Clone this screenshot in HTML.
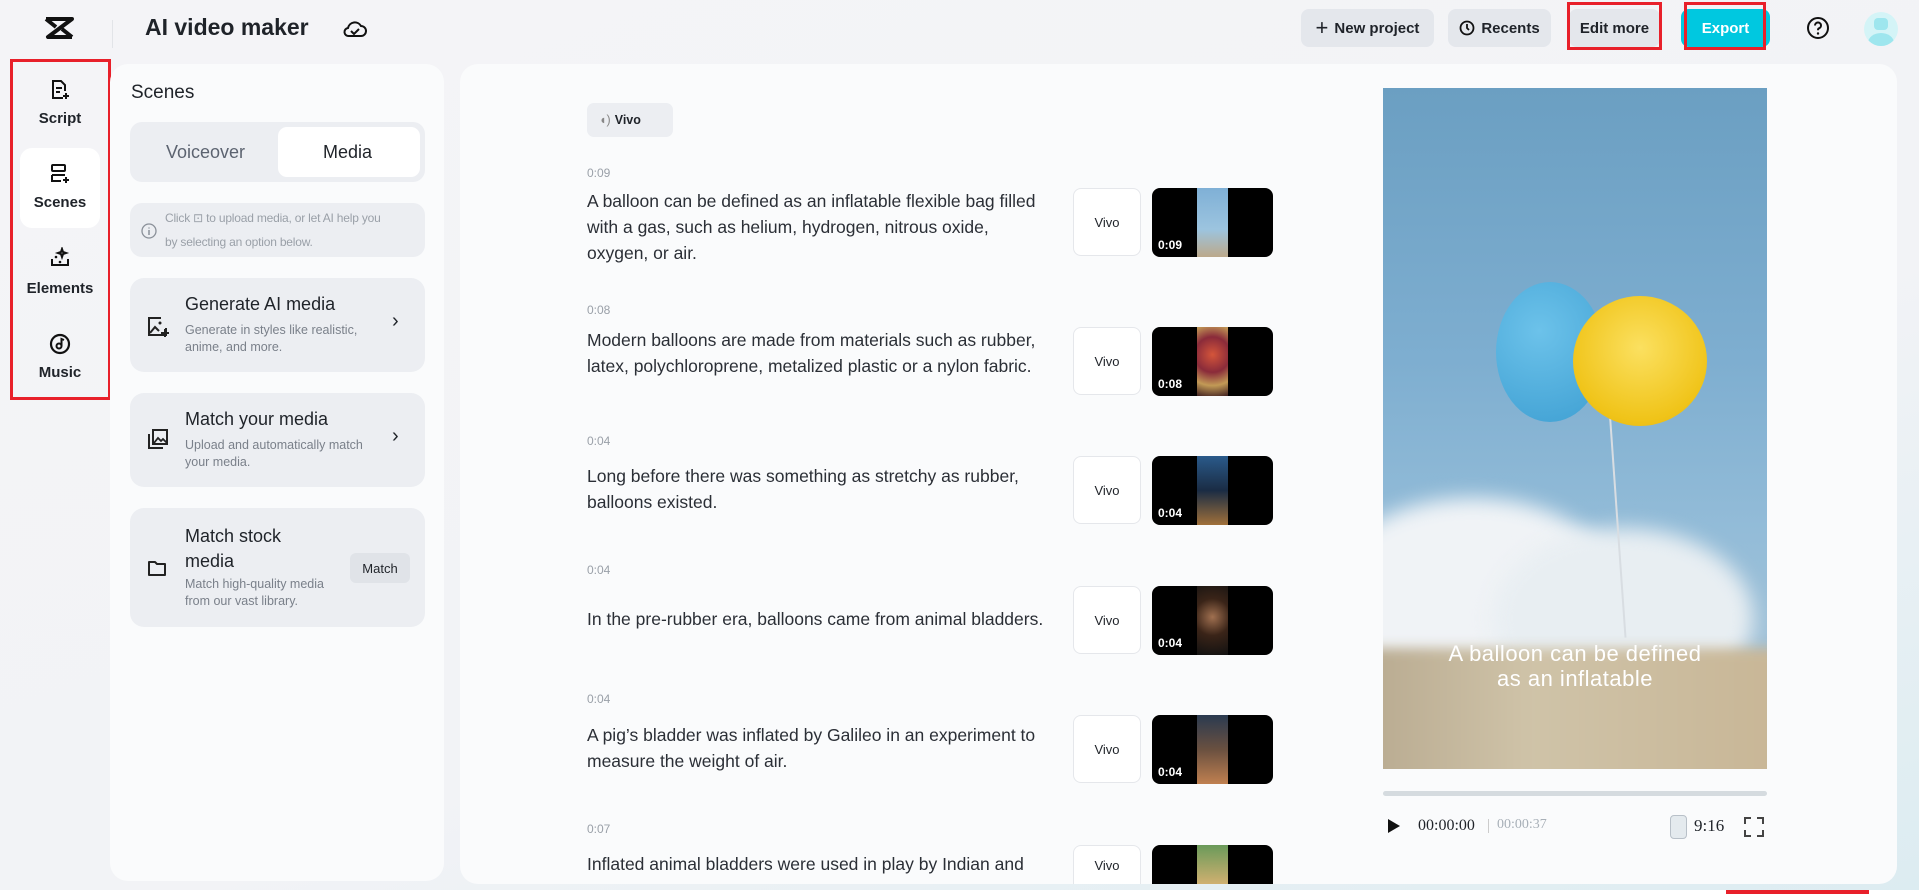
<!DOCTYPE html>
<html><head><meta charset="utf-8"><style>
*{box-sizing:border-box;margin:0;padding:0}
body{width:1919px;height:894px;overflow:hidden;font-family:"Liberation Sans",sans-serif;color:#1f2329;background:linear-gradient(160deg,#f4f4f7 0%,#f2f3f6 60%,#dcecf1 100%);position:relative}
.abs{position:absolute}
.btn{position:absolute;top:9px;height:38px;border-radius:8px;background:#e4e7ec;font-size:15px;font-weight:bold;display:flex;align-items:center;justify-content:center;gap:6px;color:#1f2329}
.red{position:absolute;border:3px solid #e8202a}
.side{position:absolute;left:20px;width:80px;text-align:center;font-size:15px;font-weight:bold}
.card{position:absolute;left:130px;width:295px;background:#eceef2;border-radius:14px}
.card .t{position:absolute;left:55px;font-size:18px;color:#1f2329}
.card .s{position:absolute;left:55px;font-size:12.5px;color:#7a808a;line-height:17px}
.ts{position:absolute;left:587px;font-size:12px;color:#9aa0a8}
.tx{position:absolute;left:587px;font-size:17.5px;line-height:26px;color:#2b2f36;width:465px}
.vv{position:absolute;left:1073px;width:68px;height:68px;border:1px solid #e5e7eb;border-radius:8px;background:#fff;font-size:13px;display:flex;align-items:center;justify-content:center}
.th{position:absolute;left:1152px;width:121px;height:69px;background:#000;border-radius:8px;overflow:hidden}
.th i{position:absolute;left:45px;top:0;width:31px;height:100%}
.th b{position:absolute;left:6px;bottom:5px;color:#fff;font-size:12px}
</style></head><body>
<svg class="abs" style="left:44px;top:16px" width="30" height="24" viewBox="0 0 30 24"><path d="M2 3h26L4 21h24M2 3l10 8M28 21L18 13" stroke="#111" stroke-width="4" fill="none" stroke-linejoin="round"/></svg>
<div class="abs" style="left:112px;top:20px;width:1px;height:28px;background:#e2e4e8"></div>
<div class="abs" style="left:145px;top:14px;font-size:23px;font-weight:bold">AI video maker</div>
<svg class="abs" style="left:342px;top:17px" width="26" height="24" viewBox="0 0 26 24"><path d="M7 19h12a5 5 0 0 0 0-10 7 7 0 0 0-13 2 4 4 0 0 0 1 8z" stroke="#111" stroke-width="2" fill="none"/><path d="M9 14l3 3 5-5" stroke="#111" stroke-width="2" fill="none"/></svg>
<div class="btn" style="left:1301px;width:133px"><span style="font-size:22px;font-weight:normal">+</span>New project</div>
<div class="btn" style="left:1448px;width:103px"><svg width="16" height="16" viewBox="0 0 16 16"><circle cx="8" cy="8" r="6.5" stroke="#111" stroke-width="1.8" fill="none"/><path d="M8 4v4l2 2" stroke="#111" stroke-width="1.8" fill="none"/></svg>Recents</div>
<div class="btn" style="left:1569px;width:91px">Edit more</div>
<div class="red" style="left:1567px;top:2px;width:95px;height:48px"></div>
<div class="btn" style="left:1681px;width:89px;background:#00c8e0;color:#fff">Export</div>
<div class="red" style="left:1684px;top:2px;width:82px;height:48px"></div>
<svg class="abs" style="left:1806px;top:16px" width="24" height="24" viewBox="0 0 24 24"><circle cx="12" cy="12" r="10" stroke="#111" stroke-width="2" fill="none"/><path d="M9 9.5a3 3 0 1 1 4 2.8c-1 .4-1 1-1 2" stroke="#111" stroke-width="2" fill="none"/><circle cx="12" cy="17.5" r="1.2" fill="#111"/></svg>
<div class="abs" style="left:1864px;top:12px;width:34px;height:34px;border-radius:50%;background:#d4f4f7;overflow:hidden"><div class="abs" style="left:10px;top:6px;width:14px;height:12px;border-radius:4px;background:#9ee6ee"></div><div class="abs" style="left:4px;top:21px;width:26px;height:20px;border-radius:50%;background:#9ee6ee"></div></div>

<div class="abs" style="left:20px;top:148px;width:80px;height:80px;background:#fff;border-radius:12px"></div>
<svg class="abs" style="left:50px;top:79px" width="20" height="22" viewBox="0 0 20 22"><path d="M13 19H3V2h8l4 4v6" stroke="#111" stroke-width="2" fill="none"/><path d="M6 9h6M6 13h4M16 14v6M13 17h6" stroke="#111" stroke-width="2"/></svg>
<div class="side" style="top:110px">Script</div>
<svg class="abs" style="left:50px;top:163px" width="20" height="22" viewBox="0 0 20 22"><rect x="2" y="2" width="13" height="6" rx="1" stroke="#111" stroke-width="2" fill="none"/><path d="M2 12h13M2 12v6h9M16 14v6M13 17h6" stroke="#111" stroke-width="2" fill="none"/></svg>
<div class="side" style="top:194px">Scenes</div>
<svg class="abs" style="left:50px;top:247px" width="20" height="22" viewBox="0 0 20 22"><path d="M12 2l1 3 3 1-3 1-1 3-1-3-3-1 3-1zM2 12v6h16v-6" stroke="#111" stroke-width="2" fill="none"/><circle cx="6" cy="10" r="1.3" fill="#111"/><circle cx="10" cy="15" r="1.3" fill="#111"/></svg>
<div class="side" style="top:280px">Elements</div>
<svg class="abs" style="left:49px;top:333px" width="22" height="22" viewBox="0 0 22 22"><circle cx="11" cy="11" r="9" stroke="#111" stroke-width="2.2" fill="none"/><circle cx="10" cy="13" r="2.5" stroke="#111" stroke-width="2" fill="none"/><path d="M12.5 13V6l2.5 1" stroke="#111" stroke-width="2" fill="none"/></svg>
<div class="side" style="top:364px">Music</div>
<div class="red" style="left:10px;top:59px;width:101px;height:341px"></div>

<div class="abs" style="left:110px;top:64px;width:334px;height:817px;background:#fafbfc;border-radius:18px"></div>
<div class="abs" style="left:131px;top:82px;font-size:19px">Scenes</div>
<div class="abs" style="left:130px;top:122px;width:295px;height:60px;background:#eceef2;border-radius:12px"></div>
<div class="abs" style="left:278px;top:127px;width:142px;height:50px;background:#fff;border-radius:9px"></div>
<div class="abs" style="left:166px;top:142px;font-size:18px;color:#5c6370">Voiceover</div>
<div class="abs" style="left:323px;top:142px;font-size:18px">Media</div>
<div class="abs" style="left:130px;top:203px;width:295px;height:54px;background:#eceef2;border-radius:12px"></div>
<svg class="abs" style="left:141px;top:223px" width="16" height="16" viewBox="0 0 16 16"><circle cx="8" cy="8" r="7" stroke="#8a9099" stroke-width="1.3" fill="none"/><path d="M8 7v5M8 4.5v1" stroke="#8a9099" stroke-width="1.5"/></svg>
<div class="abs" style="left:165px;top:206px;font-size:12px;color:#9aa0a8;line-height:24px;width:260px;letter-spacing:-0.2px">Click ⊡ to upload media, or let AI help you<br>by selecting an option below.</div>

<div class="card" style="top:278px;height:94px"><div class="t" style="top:16px">Generate AI media</div><div class="s" style="top:44px">Generate in styles like realistic,<br>anime, and more.</div>
<svg class="abs" style="left:17px;top:38px" width="22" height="22" viewBox="0 0 22 22"><path d="M14 2H2v17h17v-7" stroke="#222" stroke-width="2" fill="none"/><path d="M3 17l5-6 4 4" stroke="#222" stroke-width="2" fill="none"/><circle cx="13" cy="7" r="1.5" fill="#222"/><path d="M18 13v8M14 17h8" stroke="#222" stroke-width="2"/></svg>
<div class="abs" style="left:262px;top:32px;font-size:20px">›</div></div>
<div class="card" style="top:393px;height:94px"><div class="t" style="top:16px">Match your media</div><div class="s" style="top:44px">Upload and automatically match<br>your media.</div>
<svg class="abs" style="left:17px;top:35px" width="22" height="22" viewBox="0 0 22 22"><rect x="6" y="2" width="14" height="14" stroke="#222" stroke-width="2" fill="none"/><path d="M2 6v14h14" stroke="#222" stroke-width="2" fill="none"/><path d="M7 15l4-5 3 3 2-2 4 4" stroke="#222" stroke-width="1.8" fill="none"/></svg>
<div class="abs" style="left:262px;top:32px;font-size:20px">›</div></div>
<div class="card" style="top:508px;height:119px"><div class="t" style="top:16px;line-height:25px">Match stock<br>media</div><div class="s" style="top:68px">Match high-quality media<br>from our vast library.</div>
<svg class="abs" style="left:17px;top:51px" width="20" height="18" viewBox="0 0 20 18"><path d="M2 3h6l2 2h8v11H2z" stroke="#222" stroke-width="2" fill="none" stroke-linejoin="round"/></svg>
<div class="abs" style="left:220px;top:45px;width:60px;height:30px;background:#e0e3e8;border-radius:6px;font-size:13px;display:flex;align-items:center;justify-content:center">Match</div></div>

<div class="abs" style="left:460px;top:64px;width:1437px;height:820px;background:#fafbfc;border-radius:18px"></div>
<div class="abs" style="left:587px;top:103px;width:86px;height:34px;background:#eceef2;border-radius:7px;font-size:12.5px;font-weight:bold;display:flex;align-items:center;padding-left:12px;gap:4px"><span style="color:#888;font-weight:normal">◖)</span>Vivo</div>

<div class="ts" style="top:166px">0:09</div>
<div class="tx" style="top:188px">A balloon can be defined as an inflatable flexible bag filled with a gas, such as helium, hydrogen, nitrous oxide,<br>oxygen, or air.</div>
<div class="vv" style="top:188px">Vivo</div>
<div class="th" style="top:188px"><i style="background:linear-gradient(#7fb0d6,#9cc4df 60%,#bca98a)"></i><b>0:09</b></div>

<div class="ts" style="top:303px">0:08</div>
<div class="tx" style="top:327px">Modern balloons are made from materials such as rubber, latex, polychloroprene, metalized plastic or a nylon fabric.</div>
<div class="vv" style="top:327px">Vivo</div>
<div class="th" style="top:327px"><i style="background:radial-gradient(circle at 50% 40%,#d4553a,#8a2b3a 40%,#c29a56 70%,#402020)"></i><b>0:08</b></div>

<div class="ts" style="top:434px">0:04</div>
<div class="tx" style="top:463px">Long before there was something as stretchy as rubber, balloons existed.</div>
<div class="vv" style="top:456px">Vivo</div>
<div class="th" style="top:456px"><i style="background:linear-gradient(#2a5a8a,#1a2c44 50%,#a0703a)"></i><b>0:04</b></div>

<div class="ts" style="top:563px">0:04</div>
<div class="tx" style="top:606px;width:500px">In the pre-rubber era, balloons came from animal bladders.</div>
<div class="vv" style="top:586px">Vivo</div>
<div class="th" style="top:586px"><i style="background:radial-gradient(circle at 50% 45%,#a07050,#3a2418 45%,#111)"></i><b>0:04</b></div>

<div class="ts" style="top:692px">0:04</div>
<div class="tx" style="top:722px">A pig’s bladder was inflated by Galileo in an experiment to measure the weight of air.</div>
<div class="vv" style="top:715px">Vivo</div>
<div class="th" style="top:715px"><i style="background:linear-gradient(#2a3a50,#6a5040 50%,#c08050)"></i><b>0:04</b></div>

<div class="ts" style="top:822px">0:07</div>
<div class="tx" style="top:851px">Inflated animal bladders were used in play by Indian and</div>
<div class="vv" style="top:845px;height:39px;border-bottom:none;border-radius:8px 8px 0 0">Vivo</div>
<div class="th" style="top:845px;height:39px;border-radius:8px 8px 0 0"><i style="background:linear-gradient(#6a9a5a,#d0b070)"></i></div>

<div class="abs" style="left:1383px;top:88px;width:384px;height:681px;overflow:hidden;background:linear-gradient(180deg,#6b9fc2 0%,#7eaed0 40%,#93bcd8 65%,#b0c8d8 100%)">
  <div class="abs" style="left:-60px;top:410px;width:300px;height:200px;border-radius:50%;background:#f0f3f6;filter:blur(10px)"></div>
  <div class="abs" style="left:110px;top:440px;width:260px;height:180px;border-radius:50%;background:#e8eef2;filter:blur(10px)"></div>
  <div class="abs" style="left:-20px;top:560px;width:420px;height:140px;background:linear-gradient(90deg,#b8aa90,#cfc3a8 40%,#c8b696);filter:blur(6px)"></div>
  <div class="abs" style="left:230px;top:220px;width:2px;height:330px;background:#d8dde2;transform:rotate(-4deg)"></div>
  <div class="abs" style="left:113px;top:194px;width:108px;height:140px;border-radius:50%;background:radial-gradient(circle at 40% 35%,#6cc2ea,#3e9fd2)"></div>
  <div class="abs" style="left:190px;top:208px;width:134px;height:130px;border-radius:50%;background:radial-gradient(circle at 50% 40%,#fbe060,#f0c419 70%,#e0b010)"></div>
  <div class="abs" style="left:0;top:553px;width:100%;text-align:center;color:#fff;font-size:22px;line-height:25px;letter-spacing:.5px">A balloon can be defined<br>as an inflatable</div>
</div>
<div class="abs" style="left:1383px;top:791px;width:384px;height:5px;border-radius:3px;background:#d5dbdf"></div>
<svg class="abs" style="left:1387px;top:818px" width="14" height="16" viewBox="0 0 14 16"><path d="M1 1l12 7-12 7z" fill="#111"/></svg>
<div class="abs" style="left:1418px;top:817px;font-family:'Liberation Serif',serif;font-size:16px">00:00:00</div>
<div class="abs" style="left:1488px;top:819px;width:1px;height:14px;background:#ccc"></div>
<div class="abs" style="left:1497px;top:817px;font-family:'Liberation Serif',serif;font-size:14px;color:#a8b0b8">00:00:37</div>
<div class="abs" style="left:1670px;top:815px;width:17px;height:24px;border:1.5px solid #b8c0c8;border-radius:4px;background:#e4eaee"></div>
<div class="abs" style="left:1694px;top:816px;font-family:'Liberation Serif',serif;font-size:17px">9:16</div>
<svg class="abs" style="left:1744px;top:817px" width="20" height="20" viewBox="0 0 20 20"><path d="M1 7V1h6M13 1h6v6M19 13v6h-6M7 19H1v-6" stroke="#444" stroke-width="2" fill="none"/></svg>

<div class="abs" style="left:0;top:890px;width:1919px;height:4px;background:#fff"></div>
<div class="abs" style="left:1726px;top:890px;width:143px;height:4px;background:#e8202a"></div>
</body></html>
